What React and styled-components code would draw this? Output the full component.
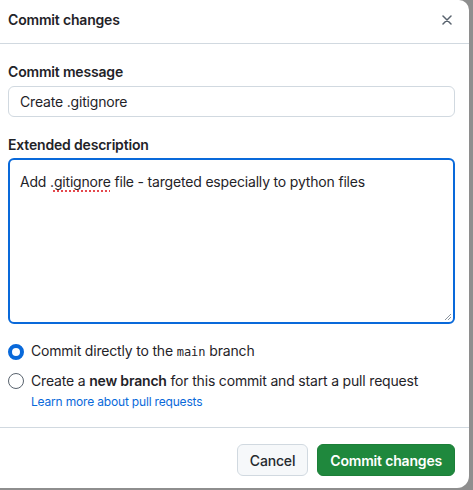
import React from "react";
import styled, { createGlobalStyle } from "styled-components";

const Global = createGlobalStyle`
  html, body { margin: 0; padding: 0; }
  body {
    background: #8e8e8e;
    font-family: Inter, "Noto Sans", "Liberation Sans", sans-serif;
    color: #1f2328;
    letter-spacing: -0.18px;
    -webkit-font-smoothing: antialiased;
  }
`;

const Dialog = styled.div`
  width: 469px;
  height: 488px;
  background: #ffffff;
  border-radius: 0 10px 12px 0;
  display: flex;
  flex-direction: column;
  overflow: hidden;
`;

const Header = styled.header`
  display: flex;
  align-items: center;
  justify-content: space-between;
  padding: 10px 14px 13px 8px;
  border-bottom: 1px solid #d1d9e0;
`;

const Title = styled.h1`
  margin: 0;
  font-size: 14px;
  line-height: 20px;
  font-weight: 600;
`;

const CloseButton = styled.button`
  border: 0;
  background: none;
  padding: 0;
  width: 16px;
  height: 16px;
  display: flex;
  align-items: center;
  justify-content: center;
  color: #59636e;
`;

const Body = styled.div`
  padding: 18px 14px 0 8px;
  display: flex;
  flex-direction: column;
`;

const Label = styled.label`
  font-size: 14px;
  line-height: 20px;
  font-weight: 600;
  margin-bottom: ${(p) => p.$gap || 4}px;
  margin-top: ${(p) => p.$top || 0}px;
`;

const Input = styled.div`
  height: 29px;
  border: 1px solid #d1d9e0;
  border-radius: 6px;
  padding: 0 11px;
  display: flex;
  align-items: center;
  font-size: 14px;
  background: #ffffff;
`;

const TextArea = styled.div`
  position: relative;
  border: 2px solid #0969da;
  border-radius: 6px;
  padding: 12px 10px;
  box-sizing: border-box;
  height: 166px;
  font-size: 14px;
  line-height: 20px;
`;

const Misspelled = styled.span`
  text-decoration: underline dotted #e5484d;
  text-decoration-thickness: 2px;
  text-underline-offset: 3px;
`;

const Grip = styled.svg`
  position: absolute;
  right: 1px;
  bottom: 1px;
`;

const Options = styled.div`
  display: flex;
  flex-direction: column;
  margin-top: 19px;
  gap: 13px;
`;

const Option = styled.label`
  display: grid;
  grid-template-columns: 16px 1fr;
  column-gap: 7px;
  align-items: center;
  font-size: 14px;
  line-height: 16px;
`;

const Radio = styled.span`
  width: 16px;
  height: 16px;
  box-sizing: border-box;
  border-radius: 50%;
  border: ${(p) => (p.$checked ? "4.5px solid #0969da" : "1px solid #59636e")};
  background: #ffffff;
`;

const Mono = styled.code`
  font-family: "DejaVu Sans Mono", "Liberation Mono", monospace;
  font-size: 12px;
  letter-spacing: 0;
`;

const Strong = styled.strong`
  font-weight: 600;
`;

const LinkRow = styled.div`
  padding-left: 23px;
  margin-top: -12px;
`;

const Link = styled.a`
  font-size: 12px;
  line-height: 16px;
  color: #0969da;
  text-decoration: none;
`;

const Footer = styled.footer`
  margin-top: auto;
  border-top: 1px solid #d1d9e0;
  display: flex;
  justify-content: flex-end;
  gap: 9px;
  padding: 16px 14px 12px 8px;
`;

const Button = styled.button`
  height: 32px;
  padding: 0 12px;
  border-radius: 6px;
  font-family: inherit;
  letter-spacing: inherit;
  font-size: 14px;
  font-weight: ${(p) => (p.$primary ? 600 : 500)};
  color: ${(p) => (p.$primary ? "#ffffff" : "#25292e")};
  background: ${(p) => (p.$primary ? "#1f883d" : "#f6f8fa")};
  border: 1px solid ${(p) => (p.$primary ? "#1c7f38" : "#d1d9e0")};
`;

export default function App() {
  return (
    <>
      <Global />
      <Dialog>
        <Header>
          <Title>Commit changes</Title>
          <CloseButton aria-label="Close">
            <svg width="10" height="10" viewBox="0 0 10 10">
              <path d="M1 1L9 9M9 1L1 9" stroke="currentColor" strokeWidth="1.5" strokeLinecap="round" />
            </svg>
          </CloseButton>
        </Header>
        <Body>
          <Label>Commit message</Label>
          <Input>Create .gitignore</Input>
          <Label $top={18} $gap={3}>Extended description</Label>
          <TextArea>
            Add .<Misspelled>gitignore</Misspelled> file - targeted especially to python files
            <Grip width="9" height="9" viewBox="0 0 9 9">
              <path d="M8 2L2 8M8 5L5 8" stroke="#8c959f" strokeWidth="1" />
            </Grip>
          </TextArea>
          <Options>
            <Option>
              <Radio $checked />
              <span>
                Commit directly to the <Mono>main</Mono> branch
              </span>
            </Option>
            <Option>
              <Radio />
              <span>
                Create a <Strong>new branch</Strong> for this commit and start a pull request
              </span>
            </Option>
            <LinkRow>
              <Link href="#">Learn more about pull requests</Link>
            </LinkRow>
          </Options>
        </Body>
        <Footer>
          <Button>Cancel</Button>
          <Button $primary>Commit changes</Button>
        </Footer>
      </Dialog>
    </>
  );
}
